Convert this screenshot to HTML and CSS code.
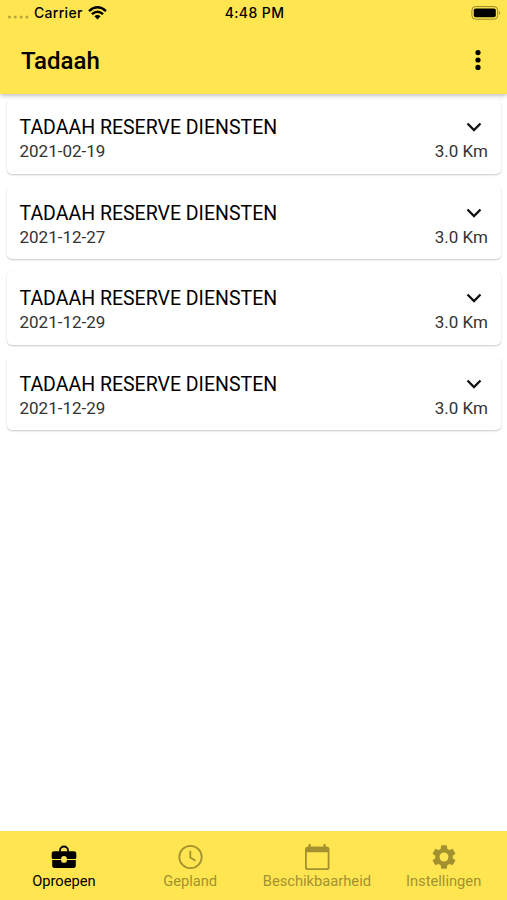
FILE: index.html
```html
<!DOCTYPE html>
<html lang="nl">
<head>
<meta charset="utf-8">
<title>Tadaah</title>
<link rel="stylesheet" href="styles.css">
</head>
<body>
<div class="app">
  <header class="header">
    <div class="status">
      <div class="carrier">
        <svg class="signal" width="22" height="4" viewBox="0 0 22 4"><circle cx="2.500" cy="2" r="1.500"/><circle cx="8.300" cy="2" r="1.500"/><circle cx="14.100" cy="2" r="1.500"/><circle cx="19.900" cy="2" r="1.500"/></svg>
        <span class="carrier-name">Carrier</span>
        <svg class="wifi" width="19" height="14" viewBox="0 0 19 14"><path d="M1 5.1Q9.5-2.5 18 5.1M3.9 8.1Q9.5 3.2 15.1 8.1" fill="none" stroke="#000" stroke-width="2.4"/><path d="M6.4 10.2Q9.5 7.8 12.6 10.2L9.5 13.4Z"/></svg>
      </div>
      <div class="time">4:48 PM</div>
      <svg class="battery" width="31" height="14" viewBox="0 0 31 14"><rect x=".9" y=".6" width="25.8" height="12.6" rx="3.6" fill="none" stroke="#96872c" stroke-width="1"/><rect x="2.8" y="2.5" width="22" height="8.8" rx="1.8"/><path d="M28.2 5Q30.3 6.9 28.2 8.8Z" fill="#96872c"/></svg>
    </div>
    <div class="bar">
      <h1 class="title">Tadaah</h1>
      <svg class="more" width="8" height="22" viewBox="0 0 8 22"><circle cx="4" cy="3.6" r="2.6"/><circle cx="4" cy="11" r="2.6"/><circle cx="4" cy="18.4" r="2.6"/></svg>
    </div>
  </header>
  <main class="list">
    <article class="card">
      <div class="row"><h2 class="name">TADAAH RESERVE DIENSTEN</h2><svg class="chevron" width="16" height="10" viewBox="0 0 16 10"><path d="M1.5 1.5 8 8l6.500-6.500"/></svg></div>
      <div class="row meta"><span class="date">2021-02-19</span><span class="distance">3.0 Km</span></div>
    </article>
    <article class="card">
      <div class="row"><h2 class="name">TADAAH RESERVE DIENSTEN</h2><svg class="chevron" width="16" height="10" viewBox="0 0 16 10"><path d="M1.5 1.5 8 8l6.500-6.500"/></svg></div>
      <div class="row meta"><span class="date">2021-12-27</span><span class="distance">3.0 Km</span></div>
    </article>
    <article class="card">
      <div class="row"><h2 class="name">TADAAH RESERVE DIENSTEN</h2><svg class="chevron" width="16" height="10" viewBox="0 0 16 10"><path d="M1.5 1.5 8 8l6.500-6.500"/></svg></div>
      <div class="row meta"><span class="date">2021-12-29</span><span class="distance">3.0 Km</span></div>
    </article>
    <article class="card">
      <div class="row"><h2 class="name">TADAAH RESERVE DIENSTEN</h2><svg class="chevron" width="16" height="10" viewBox="0 0 16 10"><path d="M1.5 1.5 8 8l6.500-6.500"/></svg></div>
      <div class="row meta"><span class="date">2021-12-29</span><span class="distance">3.0 Km</span></div>
    </article>
  </main>
  <nav class="tabs">
    <a class="tab active">
      <svg width="28" height="28" viewBox="0 0 28 28"><path d="M10 8.500V7.500a4 4 0 0 1 8 0v1" fill="none" stroke="currentColor" stroke-width="1.800"/><path d="M4 8.200h20a2.300 2.300 0 0 1 2.300 2.300v4.100a1.300 1.300 0 0 1-1.300 1.300h-8.100a2.900 2.900 0 0 0-5.800 0H3a1.300 1.300 0 0 1-1.300-1.300v-4.100A2.300 2.300 0 0 1 4 8.200ZM2.200 16.900h8.900a2.900 2.900 0 0 0 5.800 0h8.900v5.900a2.200 2.200 0 0 1-2.200 2.200H4.400a2.200 2.200 0 0 1-2.200-2.200Z"/></svg>
      <span class="label">Oproepen</span>
    </a>
    <a class="tab">
      <svg width="28" height="28" viewBox="0 0 28 28"><circle cx="14.500" cy="14" r="11.200" fill="none" stroke="currentColor" stroke-width="1.800"/><path d="M14.300 7.800v6.700l5.200 3.200" fill="none" stroke="currentColor" stroke-width="1.800"/></svg>
      <span class="label">Gepland</span>
    </a>
    <a class="tab">
      <svg width="28" height="28" viewBox="0 0 28 28"><path fill-rule="evenodd" d="M5.500 1h2.200v2.500h12.800V1h2.200v2.500h1.200A2.600 2.600 0 0 1 26.500 6v18.400a2.600 2.600 0 0 1-2.600 2.600H4.600A2.600 2.600 0 0 1 2 24.400V6a2.600 2.600 0 0 1 2.600-2.500h.9ZM3.800 9.300v15a1 1 0 0 0 1 1h18.900a1 1 0 0 0 1-1v-15Z"/></svg>
      <span class="label">Beschikbaarheid</span>
    </a>
    <a class="tab">
      <svg width="28" height="28" viewBox="0 0 24 24"><path d="M19.430 12.980c.040-.320.070-.640.070-.980s-.030-.660-.070-.980l2.110-1.650c.190-.150.240-.420.120-.640l-2-3.460c-.120-.220-.390-.300-.610-.220l-2.490 1c-.520-.400-1.080-.730-1.690-.980l-.380-2.650C14.460 2.180 14.250 2 14 2h-4c-.250 0-.460.180-.490.420l-.380 2.650c-.610.250-1.170.590-1.690.980l-2.490-1c-.230-.090-.490 0-.610.220l-2 3.460c-.130.220-.070.490.120.640l2.110 1.650c-.040.320-.070.650-.070.980s.030.660.070.980l-2.110 1.650c-.190.150-.240.420-.120.640l2 3.460c.120.220.390.300.610.220l2.490-1c.520.400 1.080.730 1.690.980l.380 2.650c.030.240.240.420.490.420h4c.250 0 .460-.180.490-.420l.380-2.650c.610-.250 1.170-.590 1.690-.980l2.490 1c.230.090.490 0 .610-.220l2-3.460c.120-.220.070-.490-.120-.640l-2.110-1.650zM12 15.800a3.800 3.800 0 1 1 0-7.600 3.800 3.800 0 0 1 0 7.600z"/></svg>
      <span class="label">Instellingen</span>
    </a>
  </nav>
</div>
</body>
</html>
```
FILE: styles.css
```css
* { box-sizing: border-box; }
body { margin: 0; background: #fff; color: #000; font-family: Roboto, "Liberation Sans", sans-serif; }
svg { display: block; flex: none; }
.app { display: flex; flex-direction: column; height: 900px; overflow: hidden; }
.header { height: 94px; flex: none; background: #ffe650; box-shadow: 0 1px 5px rgba(0,0,0,.32); z-index: 1; }
.status { display: grid; grid-template-columns: 1fr auto 1fr; align-items: center; height: 26px; padding: 0 5px 0 7px; font: 500 14px/26px Inter, sans-serif; letter-spacing: .3px; }
.carrier { display: flex; align-items: center; }
.signal { fill: #b8a63a; margin: 8px 5px 0 0; }
.wifi { margin-left: 5px; }
.battery { justify-self: end; }
.time { letter-spacing: .4px; }
.bar { display: flex; justify-content: space-between; align-items: center; height: 68px; padding: 0 25px 0 21px; }
.title { margin: 0; padding-top: 1px; font-size: 24px; font-weight: 500; line-height: 32px; }
.list { flex: 1; display: flex; flex-direction: column; gap: 12px; padding: 6px 6px 0 7px; }
.card { height: 73.500px; padding: 14px 13px 0 12.500px; border-radius: 5px; background: #fff; box-shadow: 0 1px 2px rgba(0,0,0,.22); }
.row { display: flex; justify-content: space-between; align-items: center; }
.name { margin: 0; padding-top: 1px; font-size: 19.500px; font-weight: 400; line-height: 25px; }
.chevron { margin-right: 6px; fill: none; stroke: #111; stroke-width: 2.300; }
.meta { font-size: 17px; line-height: 23px; color: #333; }
.tabs { height: 69px; flex: none; display: grid; grid-template-columns: repeat(4, 1fr); background: #ffe650; }
.tab { display: flex; flex-direction: column; align-items: center; padding-top: 12px; color: #a39130; }
.tab svg { fill: currentColor; }
.tab.active { padding-left: 1px; color: #000; }
.label { font-size: 14.700px; line-height: 20px; }
```
